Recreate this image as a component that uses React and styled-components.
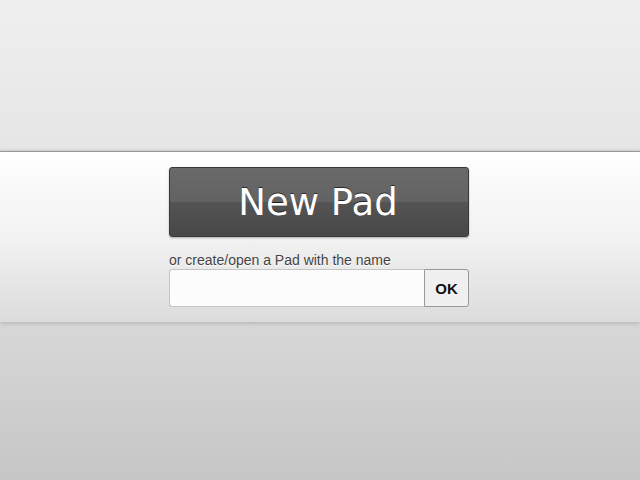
import styled, { createGlobalStyle } from 'styled-components';

const GlobalStyle = createGlobalStyle`
  html, body {
    margin: 0;
    height: 100%;
  }
  body {
    color: #333;
    font: 14px "Liberation Sans", Arial, sans-serif;
    background: linear-gradient(#efefef, #e6e6e6 30%, #d6d6d6 70%, #c6c6c6);
  }
  #root {
    min-height: 100%;
  }
`

const Page = styled.div`
  height: 480px;
  padding-top: 151px;
  box-sizing: border-box;
`

const Wrapper = styled.div`
  border-top: 1px solid #999;
  padding: 15px 2px 15px 0;
  background: linear-gradient(#fff, #f2f2f2 50%, #dcdcdc);
  box-shadow: 0 -1px 3px rgba(0, 0, 0, 0.12), 0 2px 4px rgba(0, 0, 0, 0.12);
  display: flex;
  flex-direction: column;
  align-items: center;
`

const Inner = styled.div`
  width: 300px;
  display: flex;
  flex-direction: column;
`

const NewPadButton = styled.button`
  height: 70px;
  width: 300px;
  padding: 0 2px 0 0;
  border: 1px solid #3a3a3a;
  border-radius: 3px;
  background: linear-gradient(#6a6a6a, #626262 50%, #545454 50%, #474747);
  color: #fff;
  font: 37px "DejaVu Sans", Verdana, sans-serif;
  text-shadow: 0 -1px 0 rgba(0, 0, 0, 0.6);
  box-shadow: 0 1px 2px rgba(0, 0, 0, 0.3);
  cursor: pointer;
`

const Label = styled.div`
  margin-top: 15px;
  font-size: 14px;
  line-height: 16px;
  color: #444;
  text-shadow: 0 1px 1px #fff;
`

const Form = styled.form`
  display: flex;
  height: 38px;
  margin-top: 1px;
`

const NameInput = styled.input`
  flex: 1;
  min-width: 0;
  box-sizing: border-box;
  height: 38px;
  margin: 0;
  border: 1px solid #c4c4c4;
  border-right: none;
  border-radius: 3px 0 0 3px;
  background: #fcfcfc;
  outline: none;
  font: 16px "Liberation Sans", Arial, sans-serif;
`

const OkButton = styled.button`
  width: 45px;
  height: 38px;
  box-sizing: border-box;
  margin: 0;
  border: 1px solid #999;
  border-radius: 0 3px 3px 0;
  background: #f0f0f0;
  color: #111;
  font: bold 15px "Liberation Sans", Arial, sans-serif;
  cursor: pointer;
`

function App() {
    return (
        <>
            <GlobalStyle/>
            <Page>
                <Wrapper>
                    <Inner>
                        <NewPadButton type="button">New Pad</NewPadButton>
                        <Label>or create/open a Pad with the name</Label>
                        <Form onSubmit={(e) => e.preventDefault()}>
                            <NameInput type="text"/>
                            <OkButton type="submit">OK</OkButton>
                        </Form>
                    </Inner>
                </Wrapper>
            </Page>
        </>
    );
}

export default App;
